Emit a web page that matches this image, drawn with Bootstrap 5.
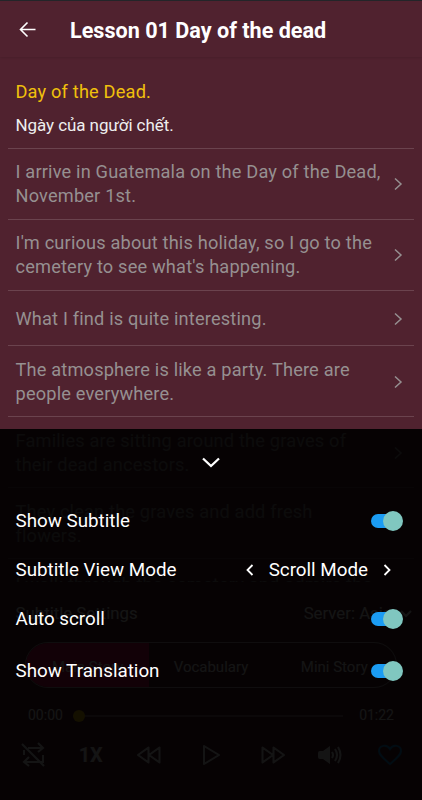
<!DOCTYPE html>
<html lang="en">
<head>
<meta charset="utf-8">
<meta name="viewport" content="width=device-width, initial-scale=1">
<title>Lesson 01 Day of the dead</title>
<link rel="stylesheet" href="https://cdn.jsdelivr.net/npm/bootstrap@5.3.0/dist/css/bootstrap.min.css">
<style>
body{background:#50222f;font-family:Roboto,"Noto Sans",sans-serif;color:#fff}
.screen{width:422px;height:800px;background:#50222f;border-top:1px solid #232529}
.topbar{height:56px;padding:2px 19px 0;box-shadow:0 1px 2px rgba(0,0,0,.1)}
.topbar h1{font-size:21.6px;font-weight:700;margin-left:33px;padding-top:2px}
svg{display:block;fill:none;stroke:currentColor;flex:none}
.lines{height:525px;padding:0 8px}
.verse{height:71px;padding:1px 8px 0 7.5px;border-bottom:1px solid #6b434e;color:#969091;font-size:18.2px;letter-spacing:.18px;line-height:23.7px;white-space:nowrap}
.verse.current{height:91.7px;padding-top:22.5px;color:#f0c00c}
.verse.single{height:55.8px}
.verse.partial{padding-top:14px}
.vi{color:#eee;font-size:17px;letter-spacing:-.08px;padding-top:11px}
.en span{display:block}
.player{height:218px}
.source{height:59px;padding:4px 10px 0 15.5px;font-size:16.8px}
.tabs{height:46px;margin:1px 25px 0;border:1px solid #fff9;border-radius:23px;font-size:15px}
.tabs div{width:33.33%;padding-top:4px}
.tabs .chosen{background:#e01458}
.times{height:51px;padding:4px 28px 0;font-size:14px}
.track{height:2px;background:#ffffff50;margin-right:16px}
.knob{width:12px;height:12px;background:#f9c70c;margin-left:10px}
.controls{height:31px;padding:0 20px}
.speed{font-size:20px;margin:0 2px 0 -2px}
.rewind{margin:0 3px 0 -3px}
.forward{margin:0 -3px 0 3px}
.sheet{height:371px;background:rgba(0,0,0,.922);font-size:18.8px}
.handle{padding-top:25px}
.option{height:28px;padding:0 19px 0 15.5px}
.option.first{margin-top:35px}
.option.view{margin-top:21px}
.option.scroll{margin-top:21px}
.switch-on{width:32px;height:20px;position:relative}
.switch-on::before{content:"";position:absolute;left:0;top:3px;width:28px;height:14px;border-radius:7px;background:#1b9cf3}
.switch-on::after{content:"";position:absolute;right:0;top:0;width:20px;height:20px;border-radius:50%;background:#80c7c0}
.picker{gap:11px;margin-right:8px}
</style>
</head>
<body>
<div class="screen position-relative overflow-hidden">
  <header class="topbar d-flex align-items-center">
    <svg width="18" height="18" viewBox="0 0 18 18" stroke-width="1.6"><path d="M8.500 1.500 1.500 8.500l7 7M1.500 8.500h15"/></svg>
    <h1 class="mb-0">Lesson 01 Day of the dead</h1>
  </header>
  <main class="lines overflow-hidden">
    <div class="verse current"><div class="en"><span>Day of the Dead.</span></div><div class="vi">Ngày của người chết.</div></div>
    <div class="verse d-flex align-items-center justify-content-between"><div class="en"><span>I arrive in Guatemala on the Day of the Dead,</span><span>November 1st.</span></div><svg width="16" height="16" viewBox="0 0 16 16" stroke-width="1.5"><path d="m5 2.500 6 5.500-6 5.500"/></svg></div>
    <div class="verse d-flex align-items-center justify-content-between"><div class="en"><span>I'm curious about this holiday, so I go to the</span><span>cemetery to see what's happening.</span></div><svg width="16" height="16" viewBox="0 0 16 16" stroke-width="1.5"><path d="m5 2.500 6 5.500-6 5.500"/></svg></div>
    <div class="verse single d-flex align-items-center justify-content-between"><div class="en"><span>What I find is quite interesting.</span></div><svg width="16" height="16" viewBox="0 0 16 16" stroke-width="1.5"><path d="m5 2.500 6 5.500-6 5.500"/></svg></div>
    <div class="verse d-flex align-items-center justify-content-between"><div class="en"><span>The atmosphere is like a party. There are</span><span>people everywhere.</span></div><svg width="16" height="16" viewBox="0 0 16 16" stroke-width="1.5"><path d="m5 2.500 6 5.500-6 5.500"/></svg></div>
    <div class="verse d-flex align-items-center justify-content-between"><div class="en"><span>Families are sitting around the graves of</span><span>their dead ancestors.</span></div><svg width="16" height="16" viewBox="0 0 16 16" stroke-width="1.5"><path d="m5 2.500 6 5.500-6 5.500"/></svg></div>
    <div class="verse d-flex align-items-center justify-content-between"><div class="en"><span>They clean the graves and add fresh</span><span>flowers.</span></div></div>
    <div class="verse partial"><div class="en"><span>I walk through the cemetery and admire the</span></div></div>
  </main>
  <footer class="player">
    <div class="source d-flex align-items-center justify-content-between"><span>Subtitle Settings</span><span class="d-flex align-items-center gap-2">Server: Asia <svg width="12" height="12" viewBox="0 0 12 12" stroke-width="2"><path d="m1 3 5 5 5-5"/></svg></span></div>
    <div class="tabs d-flex overflow-hidden text-center"><div class="chosen d-flex align-items-center justify-content-center">Main Story</div><div class="d-flex align-items-center justify-content-center">Vocabulary</div><div class="d-flex align-items-center justify-content-center">Mini Story</div></div>
    <div class="times d-flex align-items-center"><span>00:00</span><span class="knob rounded-circle"></span><span class="track flex-grow-1"></span><span>01:22</span></div>
    <div class="controls d-flex align-items-center justify-content-between">
      <svg width="26" height="26" viewBox="0 0 26 26" stroke-width="2"><path d="M2 2l22 22M8 6h15M18 1l5 5-5 4M4 13V8M23 13v7H4M9 15l-5 5 5 4"/></svg>
      <b class="speed">1X</b>
      <svg class="rewind" width="26" height="20" viewBox="0 0 26 20" stroke-width="2" stroke-linejoin="round"><path d="M12.500 2.500v15L2 10zM23.500 2.500v15L13 10z"/></svg>
      <svg width="22" height="24" viewBox="0 0 22 24" stroke-width="2" stroke-linejoin="round"><path d="M4 3v18l15-9z"/></svg>
      <svg class="forward" width="26" height="20" viewBox="0 0 26 20" stroke-width="2" stroke-linejoin="round"><path d="M2.500 2.500v15L13 10zM13.500 2.500v15L24 10z"/></svg>
      <svg width="26" height="22" viewBox="0 0 26 22" stroke-width="2"><path fill="currentColor" stroke="none" d="M3 7h3l7-5v18l-7-5H3q-2 0-2-2V9q0-2 2-2z"/><path d="M15 8q2 3 0 6M18 5q4 6 0 12M21 3q5 8 0 16"/></svg>
      <svg width="24" height="22" viewBox="0 0 24 22" color="#1498e8" stroke-width="2"><path d="M12 20C5 14 1 11 1 7 1 1 9 0 12 5c3-5 11-4 11 2 0 4-4 7-11 13z"/></svg>
    </div>
  </footer>
  <section class="sheet position-absolute start-0 bottom-0 w-100">
    <div class="handle d-flex justify-content-center"><svg width="20" height="18" viewBox="0 0 20 18" stroke-width="2.300"><path d="m2 4.500 8 7.500 8-7.500"/></svg></div>
    <div class="option first d-flex align-items-center justify-content-between"><span>Show Subtitle</span><i class="switch-on"></i></div>
    <div class="option view d-flex align-items-center justify-content-between"><span>Subtitle View Mode</span><span class="picker d-flex align-items-center"><svg width="16" height="16" viewBox="0 0 16 16" stroke-width="1.800"><path d="M10.500 3 5.500 8l5 5"/></svg>Scroll Mode<svg width="16" height="16" viewBox="0 0 16 16" stroke-width="1.800"><path d="m5.500 3 5 5-5 5"/></svg></span></div>
    <div class="option scroll d-flex align-items-center justify-content-between"><span>Auto scroll</span><i class="switch-on"></i></div>
    <div class="option d-flex align-items-center justify-content-between mt-4"><span>Show Translation</span><i class="switch-on"></i></div>
  </section>
</div>
<script src="https://cdn.jsdelivr.net/npm/bootstrap@5.3.0/dist/js/bootstrap.bundle.min.js"></script>
</body>
</html>
